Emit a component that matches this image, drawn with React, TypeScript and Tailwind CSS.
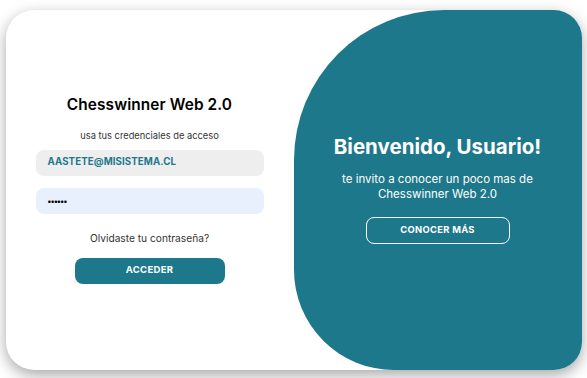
import React from "react";

export default function App() {
  return (
    <div
      className="w-full h-[378px] bg-white flex items-center justify-center"
      style={{ fontFamily: "Inter, 'Noto Sans', sans-serif" }}
    >
      <div className="w-[576px] h-[360px] mt-[1px] bg-white rounded-[28px] shadow-[0_5px_15px_rgba(0,0,0,0.35)] overflow-hidden flex">
        <div className="w-1/2 h-full flex flex-col items-center justify-center">
          <h1 className="text-[15.4px] leading-[18px] font-semibold text-black tracking-[0.1px]">
            Chesswinner Web 2.0
          </h1>
          <p className="mt-[16px] text-[9.3px] leading-[12px] text-[#333]">
            usa tus credenciales de acceso
          </p>
          <div className="mt-[8px] w-[228px] h-[26px] rounded-[8px] bg-[#eeeeee] flex items-center px-[12px]">
            <span className="text-[9.7px] font-bold text-[#1d788b] tracking-[0.1px]">
              AASTETE@MISISTEMA.CL
            </span>
          </div>
          <div className="mt-[12px] w-[228px] h-[26px] rounded-[8px] bg-[#e8f0fe] flex items-center px-[12px]">
            <span className="text-[8px] font-bold text-black leading-none tracking-[-0.6px]">
              ••••••
            </span>
          </div>
          <p className="mt-[18px] text-[10.2px] leading-[12px] text-[#333]">
            Olvidaste tu contraseña?
          </p>
          <button className="mt-[14px] w-[150px] h-[26px] rounded-[8px] bg-[#1d788b] text-white text-[9.5px] font-bold tracking-[0.3px]">
            ACCEDER
          </button>
        </div>
        <div className="w-1/2 h-full bg-[#1d788b] rounded-tl-[150px] rounded-bl-[100px] flex flex-col items-center justify-center text-white">
          <h2 className="text-[20.5px] leading-[22px] font-bold">Bienvenido, Usuario!</h2>
          <p className="mt-[14px] text-[11.5px] leading-[15px] text-center">
            te invito a conocer un poco mas de
            <br />
            Chesswinner Web 2.0
          </p>
          <button className="mt-[15px] w-[144px] h-[27px] rounded-[8px] border border-white text-white text-[9.4px] font-bold tracking-[0.3px]">
            CONOCER MÁS
          </button>
        </div>
      </div>
    </div>
  );
}
